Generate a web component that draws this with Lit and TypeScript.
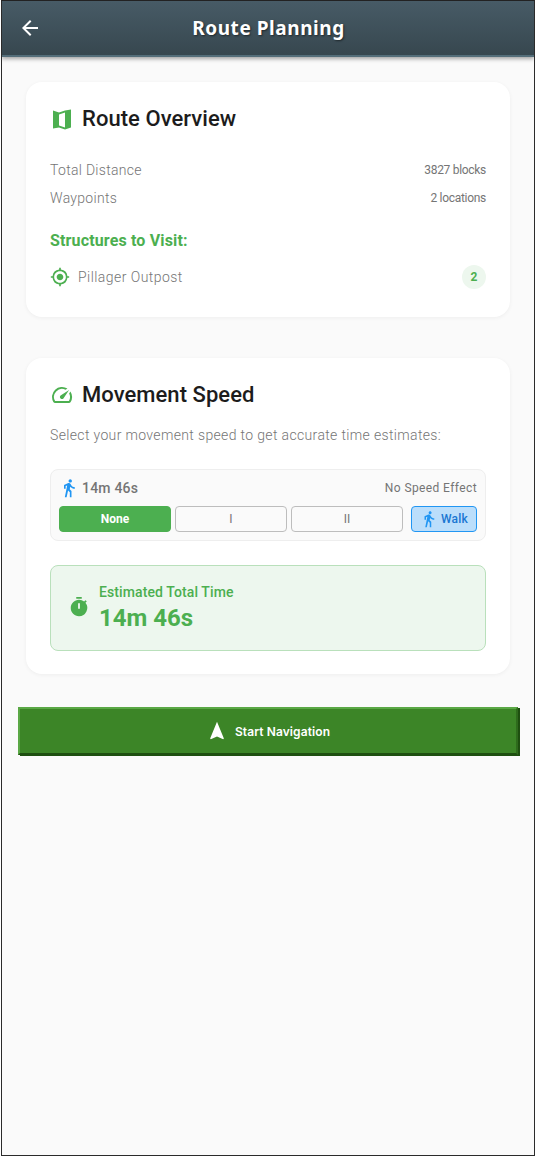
import { LitElement, html, css } from "lit";
import { customElement } from "lit/decorators.js";

const walk = html`<svg viewBox="0 0 24 24" fill="currentColor"><path d="M13.5 5.5c1.1 0 2-.9 2-2s-.9-2-2-2-2 .9-2 2 .9 2 2 2zM9.8 8.9 7 23h2.1l1.8-8 2.1 2v6h2v-7.5l-2.1-2 .6-3C14.8 12 16.8 13 19 13v-2c-1.9 0-3.5-1-4.3-2.4l-1-1.6c-.4-.6-1-1-1.7-1-.3 0-.5.1-.8.1L6 8.3V13h2V9.6l1.8-.7"/></svg>`;

@customElement("app-root")
export class AppRoot extends LitElement {
  static styles = css`
    :host { display: block; width: 536px; height: 1156px; box-sizing: border-box; font-family: Roboto, sans-serif; background: #fff; }
    .frame { box-sizing: border-box; width: 534px; height: 1156px; margin-left: 1px; border: 1px solid #2b2b2b; border-top-color: #222; background: #fafafa; display: flex; flex-direction: column; overflow: hidden; }
    .bar { box-sizing: border-box; height: 56px; flex: none; position: relative; display: flex; align-items: center; justify-content: center; background: linear-gradient(180deg, #475b66, #37474f); border-bottom: 2px solid #546e7a; box-shadow: 0 2px 4px rgba(0,0,0,.35); color: #fff; }
    .bar h1 { margin: 0 0 0 1px; font: 700 19px "Noto Sans", sans-serif; letter-spacing: .55px; text-shadow: 1px 1px 2px rgba(0,0,0,.5); }
    .back { position: absolute; left: 16px; top: 15px; width: 24px; height: 24px; }
    .content { padding: 25px 24px 0 24px; display: flex; flex-direction: column; }
    .card { background: #fff; border-radius: 16px; box-shadow: 0 1px 4px rgba(0,0,0,.05); padding: 25px 24px 24px; box-sizing: border-box; }
    .c1 { height: 235px; margin-bottom: 41px; }
    .c2 { height: 316px; }
    .head { display: flex; align-items: center; gap: 8px; height: 24px; font-size: 22px; font-weight: 500; color: #1c1c1c; line-height: 24px; letter-spacing: .05px; }
    .head svg { width: 24px; height: 24px; color: #4caf50; flex: none; }
    .row { display: flex; justify-content: space-between; height: 28px; align-items: center; }
    .row .l { font-size: 14px; font-weight: 300; letter-spacing: .3px; color: #757575; }
    .row .r { font-size: 12px; letter-spacing: -.3px; color: #757575; margin-top: -1px; }
    .rows { margin-top: 25px; }
    .sub { margin-top: 19px; font-size: 16px; font-weight: 700; color: #4caf50; line-height: 20px; letter-spacing: .15px; }
    .st { display: flex; align-items: center; margin-top: 14px; height: 24px; }
    .st svg { width: 20px; height: 20px; color: #4caf50; flex: none; }
    .st span.n { margin-left: 8px; font-size: 14px; font-weight: 300; letter-spacing: .45px; color: #757575; flex: 1; }
    .badge { width: 24px; height: 24px; border-radius: 12px; background: #edf7ee; color: #4caf50; font-size: 12px; font-weight: 700; display: flex; align-items: center; justify-content: center; }
    .desc { margin-top: 19px; font-size: 14px; font-weight: 300; letter-spacing: .35px; color: #757575; line-height: 18px; }
    .speed { margin-top: 25px; box-sizing: border-box; height: 72px; background: #fafafa; border: 1px solid #eee; border-radius: 8px; padding: 7px 8px 8px; display: flex; flex-direction: column; }
    .top { display: flex; align-items: center; height: 21px; margin-bottom: 8px; }
    .top svg { width: 20px; height: 20px; color: #2196f3; flex: none; }
    .top b { margin-left: 3px; font-size: 14px; font-weight: 500; color: #757575; flex: 1; letter-spacing: .2px; }
    .top span { font-size: 12px; color: #757575; letter-spacing: .4px; }
    .btns { display: flex; gap: 4px; height: 26px; }
    .btn { box-sizing: border-box; width: 112px; border: 1px solid #bdbdbd; border-radius: 4px; background: #fafafa; color: #757575; font-size: 12px; font-weight: 400; display: flex; align-items: center; justify-content: center; }
    .btn.on { background: #4caf50; border-color: #4caf50; color: #fff; font-weight: 700; }
    .walk { box-sizing: border-box; width: 66px; margin-left: 4px; border: 1px solid #2196f3; border-radius: 4px; background: #bbdefb; color: #1976d2; font-size: 12px; font-weight: 500; display: flex; align-items: center; justify-content: center; gap: 3px; letter-spacing: .2px; }
    .walk svg { width: 18px; height: 18px; color: #2196f3; flex: none; }
    .est { margin-top: 24px; box-sizing: border-box; height: 86px; background: #edf7ee; border: 1px solid #b9e0bb; border-radius: 8px; padding: 0 17px; display: flex; align-items: center; gap: 9px; color: #4caf50; }
    .est svg { width: 22px; height: 22px; flex: none; margin-top: -2px; }
    .est .t { font-size: 14px; font-weight: 500; line-height: 18px; letter-spacing: .1px; }
    .est .v { font-size: 24px; font-weight: 700; line-height: 30px; margin-top: 2px; }
    .go { margin: 33px 0 0 -8px; width: 500px; height: 48px; box-sizing: border-box; background: #3c8527; border-style: solid; border-width: 2px; border-color: #5aa845 #2e6b1c #1e4f10 #5aa845; box-shadow: 2px 1px 0 #1e4f10; display: flex; align-items: center; justify-content: center; gap: 7px; color: #fff; font: 600 12px Inter, sans-serif; letter-spacing: .1px; }
    .go svg { width: 22px; height: 22px; flex: none; }
  `;

  render() {
    return html`<div class="frame">
      <div class="bar">
        <svg class="back" viewBox="0 0 24 24" fill="#fff"><path d="M20 11H7.83l5.59-5.59L12 4l-8 8 8 8 1.41-1.41L7.83 13H20v-2z"/></svg>
        <h1>Route Planning</h1>
      </div>
      <div class="content">
        <div class="card c1">
          <div class="head">
            <svg viewBox="0 0 24 24" fill="currentColor"><path d="M3 3.6 9 5.6 15 3.6 21 2.6V20.4L15 22.4 9 20.4 3 21.4V3.6ZM9 7.6V18.4L15 20.4V5.6L9 7.6Z" fill-rule="evenodd"/></svg>
            Route Overview
          </div>
          <div class="rows">
            <div class="row"><span class="l">Total Distance</span><span class="r">3827 blocks</span></div>
            <div class="row"><span class="l">Waypoints</span><span class="r">2 locations</span></div>
          </div>
          <div class="sub">Structures to Visit:</div>
          <div class="st">
            <svg viewBox="0 0 24 24" fill="currentColor"><path d="M12 8c-2.21 0-4 1.79-4 4s1.79 4 4 4 4-1.79 4-4-1.79-4-4-4zm8.94 3A8.994 8.994 0 0 0 13 3.06V1h-2v2.06A8.994 8.994 0 0 0 3.06 11H1v2h2.06A8.994 8.994 0 0 0 11 20.94V23h2v-2.06A8.994 8.994 0 0 0 20.94 13H23v-2h-2.06zM12 19c-3.87 0-7-3.13-7-7s3.13-7 7-7 7 3.13 7 7-3.13 7-7 7z"/></svg>
            <span class="n">Pillager Outpost</span>
            <span class="badge">2</span>
          </div>
        </div>
        <div class="card c2">
          <div class="head">
            <svg viewBox="0 0 24 24" fill="currentColor"><path d="m20.38 8.57-1.23 1.85a8 8 0 0 1-.22 7.58H5.07A8 8 0 0 1 15.58 6.85l1.85-1.23A10 10 0 0 0 3.35 19a2 2 0 0 0 1.72 1h13.85a2 2 0 0 0 1.74-1 10 10 0 0 0-.27-10.44zm-9.79 6.84a2 2 0 0 0 2.83 0l5.66-8.49-8.49 5.66a2 2 0 0 0 0 2.83z"/></svg>
            Movement Speed
          </div>
          <div class="desc">Select your movement speed to get accurate time estimates:</div>
          <div class="speed">
            <div class="top">${walk}<b>14m 46s</b><span>No Speed Effect</span></div>
            <div class="btns">
              <div class="btn on">None</div>
              <div class="btn">I</div>
              <div class="btn">II</div>
              <div class="walk">${walk}Walk</div>
            </div>
          </div>
          <div class="est">
            <svg viewBox="0 0 24 24" fill="currentColor"><path d="M15 1H9v2h6V1zm4.03 6.39 1.42-1.42c-.43-.51-.9-.99-1.41-1.41l-1.42 1.42A8.962 8.962 0 0 0 12 4c-4.97 0-9 4.03-9 9s4.02 9 9 9a8.994 8.994 0 0 0 7.03-14.61zM13 14h-2V8h2v6z"/></svg>
            <div><div class="t">Estimated Total Time</div><div class="v">14m 46s</div></div>
          </div>
        </div>
        <div class="go">
          <svg viewBox="0 0 24 24" fill="#fff"><path d="M12 2 4.5 20.3l.7.7L12 18l6.8 3 .7-.7z"/></svg>
          <span>Start Navigation</span>
        </div>
      </div>
    </div>`;
  }
}
